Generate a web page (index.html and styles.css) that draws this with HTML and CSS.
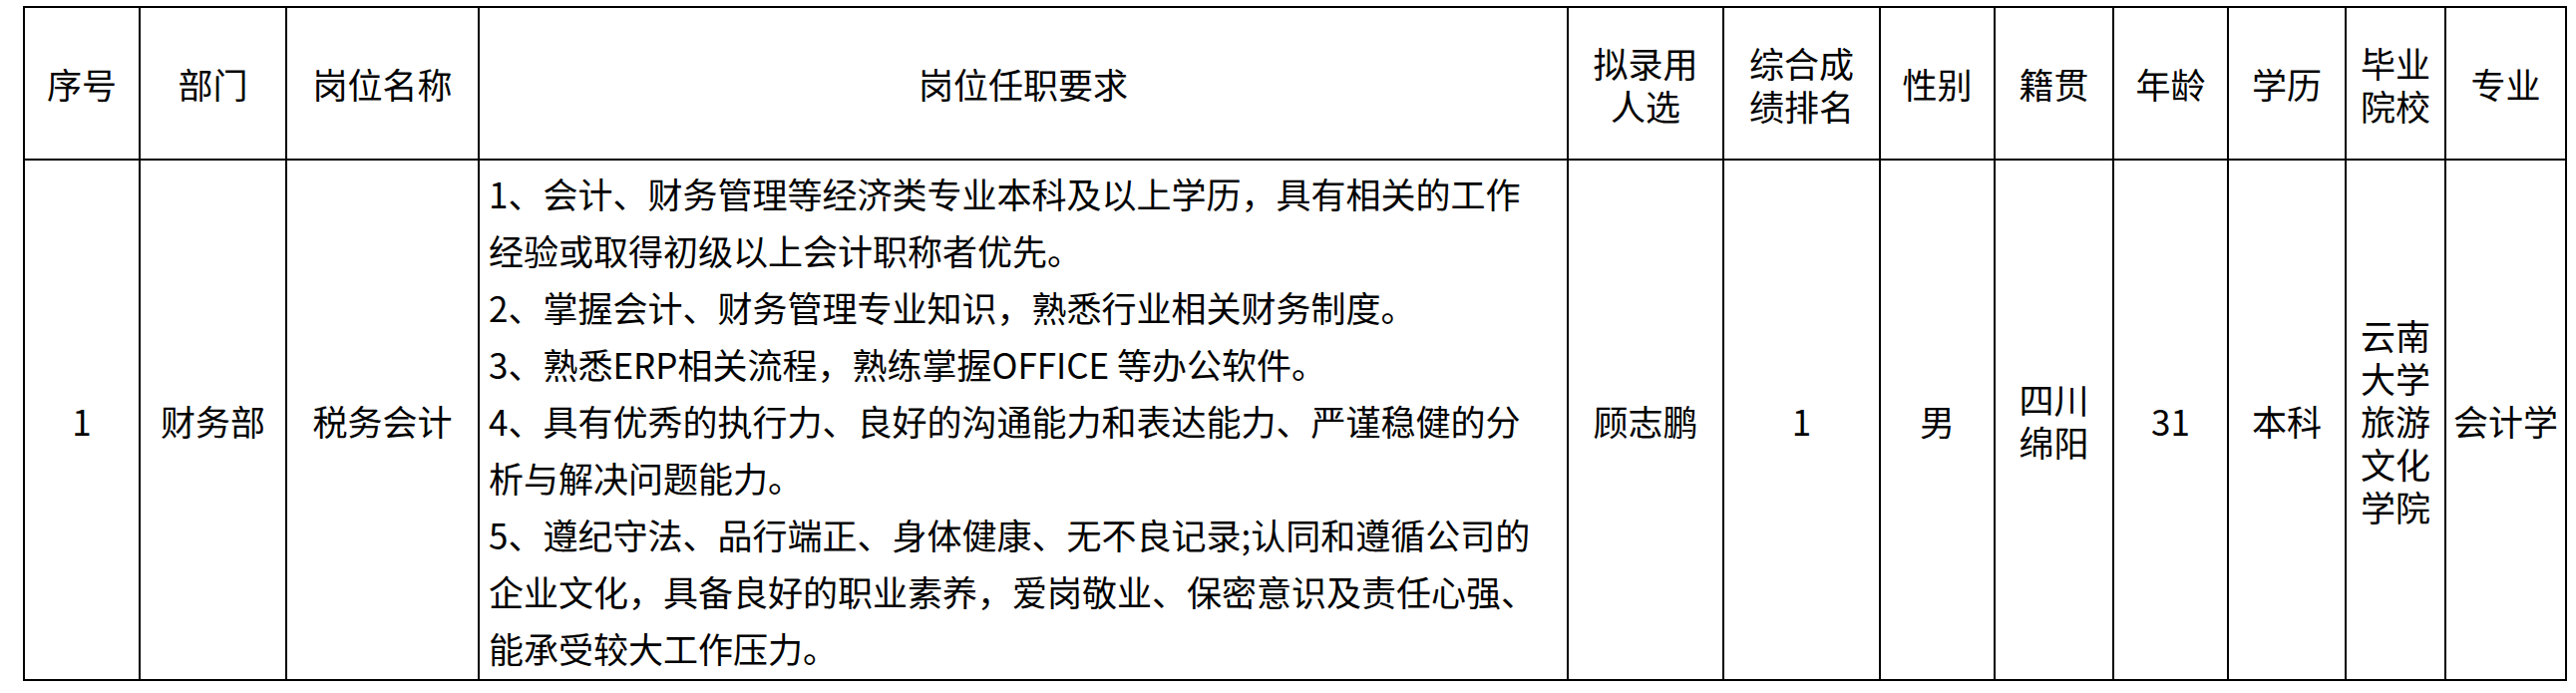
FILE: index.html
```html
<!DOCTYPE html>
<html lang="zh-CN">
<head>
<meta charset="utf-8">
<title>岗位任职要求</title>
<link rel="stylesheet" href="styles.css">
</head>
<body>
<table class="grid">
  <colgroup>
    <col class="w-seq">
    <col class="w-dept">
    <col class="w-post">
    <col class="w-req">
    <col class="w-name">
    <col class="w-rank">
    <col class="w-sex">
    <col class="w-home">
    <col class="w-age">
    <col class="w-edu">
    <col class="w-school">
    <col class="w-major">
  </colgroup>
  <thead>
    <tr class="head-row">
      <th>序号</th>
      <th>部门</th>
      <th>岗位名称</th>
      <th>岗位任职要求</th>
      <th>拟录用<br>人选</th>
      <th>综合成<br>绩排名</th>
      <th>性别</th>
      <th>籍贯</th>
      <th>年龄</th>
      <th>学历</th>
      <th>毕业<br>院校</th>
      <th>专业</th>
    </tr>
  </thead>
  <tbody>
    <tr class="body-row">
      <td>1</td>
      <td>财务部</td>
      <td>税务会计</td>
      <td class="req">1、会计、财务管理等经济类专业本科及以上学历，具有相关的工作<br>经验或取得初级以上会计职称者优先。<br>2、掌握会计、财务管理专业知识，熟悉行业相关财务制度。<br>3、熟悉ERP相关流程，熟练掌握OFFICE 等办公软件。<br>4、具有优秀的执行力、良好的沟通能力和表达能力、严谨稳健的分<br>析与解决问题能力。<br>5、遵纪守法、品行端正、身体健康、无不良记录;认同和遵循公司的<br>企业文化，具备良好的职业素养，爱岗敬业、保密意识及责任心强、<br>能承受较大工作压力。</td>
      <td>顾志鹏</td>
      <td>1</td>
      <td>男</td>
      <td>四川<br>绵阳</td>
      <td>31</td>
      <td>本科</td>
      <td>云南<br>大学<br>旅游<br>文化<br>学院</td>
      <td>会计学</td>
    </tr>
  </tbody>
</table>
</body>
</html>
```

FILE: styles.css
```css
html, body {
  margin: 0;
  padding: 0;
  background: #ffffff;
}

body {
  padding: 6px 0 0 23px;
  font-family: "Noto Sans CJK SC", "Noto Sans", sans-serif;
  color: #000000;
}

.grid {
  border-collapse: separate;
  border-spacing: 0;
  table-layout: fixed;
  width: 2551px;
  border-top: 2px solid #000;
  border-left: 2px solid #000;
}

.w-seq { width: 116px; }
.w-dept { width: 147px; }
.w-post { width: 193px; }
.w-req { width: 1092px; }
.w-name { width: 156px; }
.w-rank { width: 157px; }
.w-sex { width: 115px; }
.w-home { width: 119px; }
.w-age { width: 115px; }
.w-edu { width: 118px; }
.w-school { width: 100px; }
.w-major { width: 121px; }

.grid th,
.grid td {
  box-sizing: border-box;
  padding: 0;
  border-right: 2px solid #000;
  border-bottom: 2px solid #000;
  font-size: 35px;
  font-weight: normal;
  line-height: 43px;
  text-align: center;
  vertical-align: middle;
  white-space: nowrap;
  overflow: hidden;
}

.head-row { height: 153px; }
.body-row { height: 522px; }

.grid td.req {
  text-align: left;
  line-height: 57px;
  padding: 0 8px 0 9px;
}
```
